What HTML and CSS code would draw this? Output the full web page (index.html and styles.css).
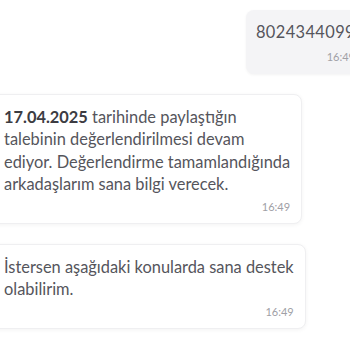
FILE: index.html
```html
<!DOCTYPE html>
<html lang="tr">
<head>
<meta charset="utf-8">
<link rel="stylesheet" href="styles.css">
</head>
<body>
<div class="chat">
  <div class="row row-user">
    <div class="bubble bubble-user">
      <div class="msg">8024344099</div>
      <div class="time">16:49</div>
    </div>
  </div>
  <div class="row row-bot">
    <div class="bubble bubble-bot">
      <div class="msg"><b>17.04.2025</b> tarihinde paylaştığın<br>talebinin değerlendirilmesi devam<br>ediyor. Değerlendirme tamamlandığında<br>arkadaşlarım sana bilgi verecek.</div>
      <div class="time">16:49</div>
    </div>
  </div>
  <div class="row row-bot">
    <div class="bubble bubble-bot">
      <div class="msg">İstersen aşağıdaki konularda sana destek<br>olabilirim.</div>
      <div class="time">16:49</div>
    </div>
  </div>
</div>
</body>
</html>
```

FILE: styles.css
```css
html, body {
  margin: 0;
  padding: 0;
  background: #ffffff;
  overflow: hidden;
}

body {
  width: 350px;
  height: 350px;
  font-family: Lato, "Noto Sans", sans-serif;
  color: #55555c;
}

.chat {
  width: 378px;
  margin-left: -11px;
  padding-top: 10px;
  display: flex;
  flex-direction: column;
  gap: 20px;
}

.row {
  display: flex;
}

.row-user {
  justify-content: flex-end;
}

.row-bot {
  justify-content: flex-start;
}

.bubble {
  border-radius: 8px;
  box-sizing: border-box;
}

.bubble-user {
  background: #f4f4f6;
  padding: 11px 12px 10px 10px;
  box-shadow: 0 1px 3px rgba(0, 0, 0, 0.05);
}

.bubble-bot {
  background: #ffffff;
  border: 1px solid #efeff1;
  box-shadow: 0 1px 4px rgba(0, 0, 0, 0.05);
  padding: 11px 11px 9px 14px;
}

.msg {
  font-size: 16.4px;
  line-height: 22.5px;
  white-space: nowrap;
}

.bubble-user .msg {
  letter-spacing: 0.4px;
}

.msg b {
  font-weight: 700;
  color: #3c3c42;
}

.time {
  font-size: 11px;
  line-height: 14px;
  color: #a0a0a6;
  text-align: right;
  margin-top: 4px;
}

.bubble-user .time {
  margin-top: 6px;
}
```
